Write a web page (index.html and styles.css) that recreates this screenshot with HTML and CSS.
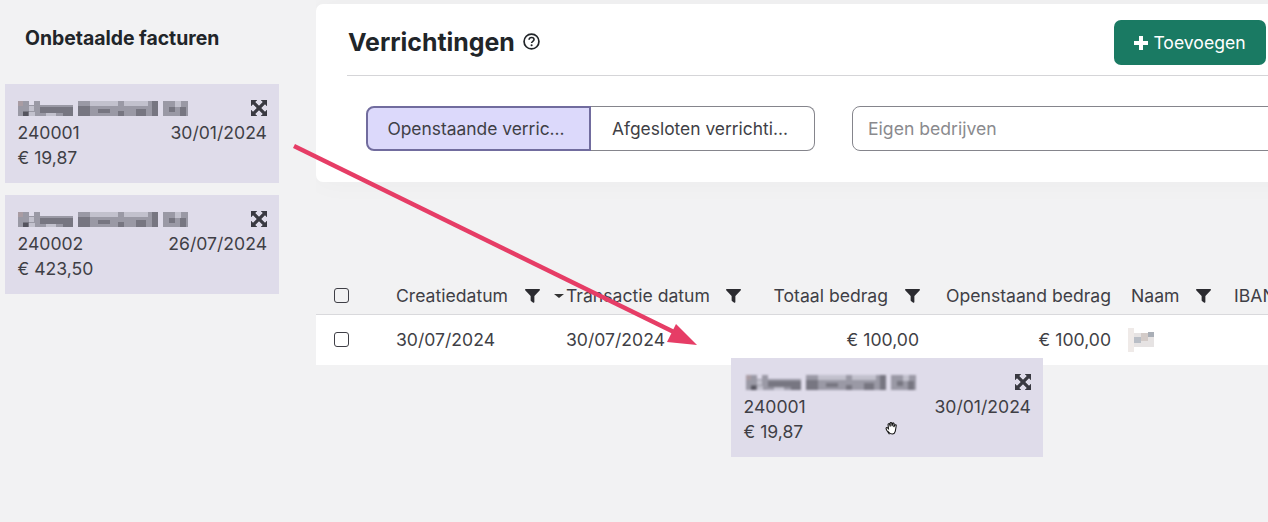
FILE: index.html
```html
<!DOCTYPE html>
<html lang="en">
<head>
    <meta charset="UTF-8">
    <meta name="viewport" content="width=device-width, initial-scale=1.0">
    <title>Verrichtingen</title>
    <link rel="stylesheet" href="styles.css">
</head>
<body>
    <svg class="defs" width="0" height="0">
        <symbol id="iconExpand" viewBox="0 0 16 16">
            <path d="M0 0h6L4 2 8 6l4-4-2-2h6v6l-2-2-4 4 4 4 2-2v6h-6l2-2-4-4-4 4 2 2H0v-6l2 2 4-4-4-4-2 2z" stroke="#3a3a42" stroke-width="0.500"/>
        </symbol>
        <symbol id="iconFilter" viewBox="0 0 16 16">
            <path d="M.8 1h14.400c.7 0 1 .8.6 1.300L10 8.600V15c0 .6-.7 1-1.200.6l-2.500-1.800A1 1 0 0 1 6 13.100V8.600L.2 2.300C-.2 1.800.1 1 .8 1z"/>
        </symbol>
        <symbol id="blurName" viewBox="0 0 170 15">
            <g fill="#9a99a5">
                <rect x="0" y="4" width="55" height="11"/>
                <rect x="60" y="0" width="80" height="15"/>
                <rect x="145" y="0" width="25" height="15"/>
                <rect x="0" y="0" width="11" height="6"/>
                <rect x="16" y="0" width="6" height="6"/>
            </g>
            <g fill="#777681">
                <rect x="5" y="10" width="6" height="5"/>
                <rect x="22" y="6" width="33" height="6"/>
                <rect x="45" y="10" width="10" height="5"/>
                <rect x="60" y="5" width="12" height="10"/>
                <rect x="80" y="8" width="12" height="4"/>
                <rect x="100" y="10" width="6" height="5"/>
                <rect x="118" y="8" width="10" height="7"/>
                <rect x="134" y="0" width="6" height="15"/>
                <rect x="151" y="6" width="6" height="5"/>
                <rect x="162" y="6" width="6" height="9"/>
            </g>
            <g fill="#c2c1cd">
                <rect x="11" y="5" width="5" height="5"/>
                <rect x="72" y="0" width="28" height="5"/>
                <rect x="106" y="0" width="24" height="5"/>
                <rect x="157" y="0" width="6" height="6"/>
                <rect x="11" y="11" width="6" height="4"/>
                <rect x="28" y="12" width="10" height="3"/>
            </g>
            <rect x="0" y="0" width="5" height="5" fill="#a99ca3"/>
            <rect x="5" y="11" width="5" height="4" fill="#55545e"/>
        </symbol>
    </svg>

    <div class="page">
        <aside class="sidebar">
            <h2 class="sidebar-title">Onbetaalde facturen</h2>
            <div class="invoice">
                <div class="invoice-row invoice-top">
                    <svg class="blur-name"><use href="#blurName"/></svg>
                    <svg class="icon-expand"><use href="#iconExpand"/></svg>
                </div>
                <div class="invoice-row"><span>240001</span><span>30/01/2024</span></div>
                <div class="invoice-row"><span>€ 19,87</span></div>
            </div>
            <div class="invoice">
                <div class="invoice-row invoice-top">
                    <svg class="blur-name"><use href="#blurName"/></svg>
                    <svg class="icon-expand"><use href="#iconExpand"/></svg>
                </div>
                <div class="invoice-row"><span>240002</span><span>26/07/2024</span></div>
                <div class="invoice-row"><span>€ 423,50</span></div>
            </div>
        </aside>

        <main class="content">
            <section class="panel">
                <div class="panel-header">
                    <div class="panel-title">
                        <h1>Verrichtingen</h1>
                        <svg class="icon-help" viewBox="0 0 16 16">
                            <circle cx="8" cy="8" r="7" fill="none" stroke="#212529" stroke-width="1.600"/>
                            <path d="M5.700 6.300C5.800 4.900 6.800 4.200 8.100 4.200c1.300 0 2.300.8 2.300 2 0 1.700-2.300 1.700-2.300 3.300" fill="none" stroke="#212529" stroke-width="1.500"/>
                            <circle cx="8.100" cy="11.500" r="1" fill="#212529"/>
                        </svg>
                    </div>
                    <button class="btn-add" type="button">
                        <svg class="icon-plus" viewBox="0 0 14 14"><path d="M5 0h4v5h5v4H9v5H5V9H0V5h5z"/></svg>
                        Toevoegen
                    </button>
                </div>
                <div class="panel-filters">
                    <div class="tabs">
                        <button class="tab tab-active" type="button">Openstaande verric...</button>
                        <button class="tab" type="button">Afgesloten verrichti...</button>
                    </div>
                    <input class="company-input" type="text" placeholder="Eigen bedrijven">
                </div>
            </section>

            <table class="grid">
                <colgroup>
                    <col class="col-check"><col class="col-created"><col class="col-trans"><col class="col-total"><col class="col-open"><col class="col-name"><col class="col-iban">
                </colgroup>
                <thead>
                    <tr>
                        <th><span class="check"></span></th>
                        <th><div class="head-cell"><span>Creatiedatum</span><svg class="icon-filter"><use href="#iconFilter"/></svg></div></th>
                        <th><div class="head-cell head-sorted"><span class="sort-caret"></span><span>Transactie datum</span><svg class="icon-filter"><use href="#iconFilter"/></svg></div></th>
                        <th><div class="head-cell head-right"><span>Totaal bedrag</span><svg class="icon-filter"><use href="#iconFilter"/></svg></div></th>
                        <th class="num head-open">Openstaand bedrag</th>
                        <th class="name-cell"><div class="head-cell head-name"><span>Naam</span><svg class="icon-filter"><use href="#iconFilter"/></svg></div></th>
                        <th>IBAN</th>
                    </tr>
                </thead>
                <tbody>
                    <tr>
                        <td><span class="check"></span></td>
                        <td>30/07/2024</td>
                        <td>30/07/2024</td>
                        <td class="num">€ 100,00</td>
                        <td class="num">€ 100,00</td>
                        <td class="name-cell">
                            <svg class="blur-short" viewBox="0 0 26 24">
                                <rect x="0" y="5" width="26" height="14" fill="#e6e3e3"/>
                                <rect x="0" y="0" width="6" height="24" fill="#efeae8"/>
                                <rect x="6" y="9" width="7" height="6" fill="#b9bec6"/>
                                <rect x="13" y="5" width="7" height="8" fill="#d3cbc8"/>
                                <rect x="20" y="4" width="6" height="5" fill="#a9aeb6"/>
                            </svg>
                        </td>
                        <td></td>
                    </tr>
                </tbody>
            </table>
        </main>
    </div>

    <!-- card being dragged -->
    <div class="invoice invoice-drag">
        <div class="invoice-row invoice-top">
            <svg class="blur-name"><use href="#blurName"/></svg>
            <svg class="icon-expand"><use href="#iconExpand"/></svg>
        </div>
        <div class="invoice-row"><span>240001</span><span>30/01/2024</span></div>
        <div class="invoice-row"><span>€ 19,87</span></div>
    </div>

    <svg class="cursor-hand" viewBox="0 0 16 16">
        <path d="M4.500 12.500C3 10.500 1.500 8.500 2 7.500c.5-.8 1.500-.2 2.200.6L3.800 4.300c0-1 1.200-1.200 1.500-.2l.6 2-.1-3c0-1 1.400-1 1.500 0l.3 2.800.5-2.500c.2-1 1.400-.8 1.400.2l-.3 3 1-1.700c.4-.8 1.500-.4 1.300.5-.3 1.700-.5 3.800-1 5.500-.4 1.400-1 2.300-2.500 2.300-1.600 0-2.500-.2-3.500-1.700z" fill="#fff" stroke="#111" stroke-width="1"/>
    </svg>

    <svg class="arrow" width="1268" height="522" viewBox="0 0 1268 522">
        <line x1="294" y1="146" x2="680" y2="335" stroke="#e63d66" stroke-width="4.500"/>
        <polygon points="697,345 676,324 667,342" fill="#e63d66"/>
    </svg>
</body>
</html>
```

FILE: styles.css
```css
* {
    box-sizing: border-box;
}

html, body {
    height: 100%;
}

body {
    margin: 0;
    background-color: #f2f2f3;
    color: #3f3f46;
    font-family: Inter, "Liberation Sans", sans-serif;
    font-size: 17.6px;
    overflow: hidden;
    position: relative;
}

.defs {
    position: absolute;
}

.page {
    display: flex;
    height: 100%;
}

/* left column */
.sidebar {
    flex: 0 0 316px;
    padding-left: 5px;
}

.sidebar-title {
    margin: 27px 0 34px 20px;
    color: #212529;
    font-size: 19.4px;
    font-weight: 700;
    line-height: 23px;
}

.invoice {
    width: 274px;
    height: 99px;
    margin-bottom: 12px;
    padding: 12px 12px 0 12.500px;
    background-color: #dfdcea;
    line-height: 25px;
}

.invoice-row {
    display: flex;
    justify-content: space-between;
    align-items: center;
    height: 25px;
}

.invoice-top {
    height: 24px;
}

.blur-name {
    width: 170px;
    height: 15px;
    filter: blur(0.6px);
}

.icon-expand {
    width: 16px;
    height: 16px;
    fill: #3a3a42;
}

.invoice-drag {
    position: absolute;
    left: 731px;
    top: 358px;
    width: 312px;
    margin: 0;
}

.invoice-drag .blur-name {
    width: 174px;
    filter: blur(1px);
}

/* main column */
.content {
    flex: 1;
    min-width: 0;
    padding-top: 4px;
    overflow: hidden;
}

.panel {
    width: 980px;
    height: 178px;
    background-color: #fff;
    border-radius: 7px;
    box-shadow: 0 0 30px rgba(0, 0, 0, 0.03);
}

.panel-header {
    display: flex;
    align-items: center;
    justify-content: space-between;
    height: 72px;
    margin-left: 31px;
    padding: 16px 30px 10px 1px;
    border-bottom: 1px solid #d5d5d8;
}

.panel-title {
    display: flex;
    align-items: center;
    gap: 8px;
    margin-top: -2px;
}

.panel-title h1 {
    margin: 0;
    color: #212529;
    font-size: 24.900px;
    font-weight: 700;
}

.icon-help {
    width: 17px;
    height: 17px;
}

.btn-add {
    display: flex;
    align-items: center;
    justify-content: center;
    gap: 5px;
    width: 152px;
    height: 45px;
    border: none;
    border-radius: 7px;
    background-color: #1a7a63;
    color: #fff;
    font-family: inherit;
    font-size: 17.6px;
}

.icon-plus {
    width: 14px;
    height: 14px;
    fill: #fff;
}

.panel-filters {
    display: flex;
    gap: 37px;
    padding: 30px 0 0 50px;
}

.tabs {
    display: flex;
    flex: 0 0 449px;
    height: 45px;
}

.tab {
    flex: 1;
    padding: 0 5px 0 0;
    border: 1px solid #85858c;
    border-left: none;
    border-radius: 0 8px 8px 0;
    background-color: #fff;
    color: #3f3f46;
    font-family: inherit;
    font-size: 17.4px;
}

.tab-active {
    flex: 0 0 225px;
    border: 2px solid #716c9e;
    border-radius: 8px 0 0 8px;
    background-color: #dcd9fb;
}

.company-input {
    flex: 0 0 500px;
    height: 45px;
    padding: 0 15px;
    border: 1px solid #85858c;
    border-radius: 8px;
    font-family: inherit;
    font-size: 17.6px;
}

.company-input::placeholder {
    color: #8a8a8e;
}

/* table */
.grid {
    width: 1015px;
    margin-top: 95px;
    border-collapse: collapse;
    table-layout: fixed;
}

.col-check { width: 64px; }
.col-created { width: 170px; }
.col-trans { width: 200px; }
.col-total { width: 185px; }
.col-open { width: 192px; }
.col-name { width: 91px; }
.col-iban { width: 113px; }

.grid th {
    height: 37px;
    padding: 0 16px;
    border-bottom: 1px solid #d9d9dc;
    font-weight: 400;
    text-align: left;
    white-space: nowrap;
}

.grid td {
    height: 51px;
    padding: 0 16px;
    background-color: #fff;
}

.grid .num {
    text-align: right;
}

.grid .head-open {
    padding-left: 0;
}

.grid .name-cell {
    padding-left: 4px;
}

.head-cell {
    display: flex;
    align-items: center;
    justify-content: space-between;
    width: 144px;
    position: relative;
}

.head-sorted {
    width: 175px;
}

.head-right {
    justify-content: flex-end;
    gap: 17px;
    width: auto;
    margin-right: -1px;
}

.head-name {
    width: 80px;
}

.sort-caret {
    position: absolute;
    left: -12px;
    top: 9px;
    border-top: 4px solid #333;
    border-left: 5px solid transparent;
    border-right: 5px solid transparent;
}

.icon-filter {
    width: 15px;
    height: 15px;
    fill: #2b2b30;
}

.check {
    display: block;
    width: 15px;
    height: 15px;
    margin-left: 2px;
    border: 1.500px solid #3f3f46;
    border-radius: 3px;
}

.blur-short {
    display: block;
    width: 26px;
    height: 24px;
    margin-left: -3px;
    filter: blur(0.5px);
}

/* overlays */
.cursor-hand {
    position: absolute;
    left: 884px;
    top: 420px;
    width: 17px;
    height: 17px;
}

.arrow {
    position: absolute;
    left: 0;
    top: 0;
    pointer-events: none;
}
```
